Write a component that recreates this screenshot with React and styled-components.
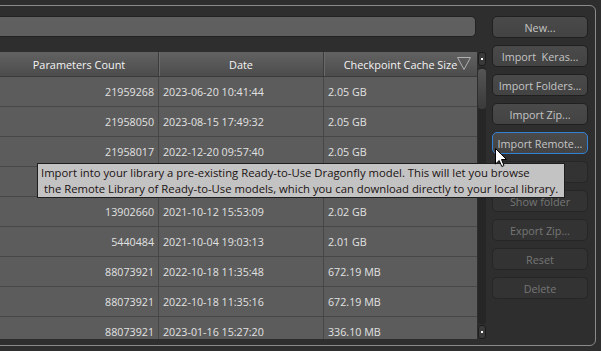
import React from 'react';
import styled, {createGlobalStyle} from 'styled-components';

const Global = createGlobalStyle`
html, body {
  margin:0;
  padding:0;
  background:#2e2e2e;
  overflow:hidden;
}
body {
  font-family:"Open Sans", "Noto Sans", sans-serif;
}
`;

const Frame = styled.div`
position:relative;
width:601px;
height:351px;
padding-top:5px;
box-sizing:border-box;
`;

const GroupBox = styled.div`
margin-left:-8px;
width:604px;
height:341px;
box-sizing:border-box;
border:1px solid #8a8a8a;
border-radius:0 6px 6px 0;
padding:10px 7px 0 7px;
display:grid;
grid-template-columns:486px 96px;
column-gap:6px;
`;

const Main = styled.div`
display:flex;
flex-direction:column;
`;

const SearchField = styled.div`
width:476px;
height:21px;
box-sizing:border-box;
background:#5f5f5f;
border:1px solid #222;
border-left:none;
border-radius:0 5px 5px 0;
`;

const TableArea = styled.div`
margin-top:15px;
display:flex;
gap:1px;
height:287px;
`;

const Table = styled.div`
width:477px;
height:287px;
overflow:hidden;
background:#5c5c5c;
color:#e2e2e2;
font-size:10.7px;
`;

const cols = '158px 165px 154px';

const HeaderRow = styled.div`
display:grid;
grid-template-columns:${cols};
height:25px;
background:linear-gradient(#626262, #4c4c4c);
border-bottom:1px solid #3a3a3a;
box-sizing:border-box;
`;

const HeadCell = styled.div`
position:relative;
display:flex;
align-items:center;
justify-content:center;
border-left:${p => (p.$first ? 'none' : '1px solid #3c3c3c')};
box-shadow:${p => (p.$first ? 'none' : 'inset 1px 0 #6a6a6a')};
color:#f4f4f4;
font-size:10.9px;
`;

const SortMark = styled.svg`
position:absolute;
right:6px;
top:5px;
`;

const Row = styled.div`
display:grid;
grid-template-columns:${cols};
height:30px;
border-bottom:1px solid #474747;
box-sizing:border-box;
`;

const Cell = styled.div`
display:flex;
align-items:center;
justify-content:${p => (p.$right ? 'flex-end' : 'flex-start')};
padding:0 4px;
border-left:${p => (p.$first ? 'none' : '1px solid #474747')};
white-space:nowrap;
`;

const ScrollBar = styled.div`
width:8px;
height:287px;
display:flex;
flex-direction:column;
gap:1px;
`;

const ScrollButton = styled.div`
height:14px;
flex:none;
box-sizing:border-box;
background:#3a3a3a;
border:1px solid #1c1c1c;
border-radius:3px;
display:flex;
align-items:center;
justify-content:center;
&::after {
  content:'';
  width:2px;
  height:2px;
  background:#fff;
}
`;

const Track = styled.div`
flex:1;
background:#262626;
border-radius:3px;
padding-top:2px;
`;

const Handle = styled.div`
height:40px;
border-radius:3px;
background:linear-gradient(#555, #3a3a3a);
`;

const Side = styled.div`
display:flex;
flex-direction:column;
gap:7px;
`;

const Button = styled.button`
height:22px;
width:96px;
box-sizing:border-box;
border-radius:5px;
font-family:"Open Sans", "Noto Sans", sans-serif;
font-size:10.8px;
padding:0;
white-space:pre;
color:${p => (p.disabled ? '#767676' : '#c4c4c4')};
background:${p => (p.disabled ? '#333' : 'linear-gradient(#4a4a4a, #434343)')};
border:1px solid ${p => (p.$focus ? '#2f82d6' : p.disabled ? '#262626' : '#202020')};
`;

const Tooltip = styled.div`
position:absolute;
left:37px;
top:163px;
width:528px;
height:35px;
box-sizing:border-box;
background:#c3c3c3;
border:1px solid #1e1e1e;
color:#1a1212;
font-size:11.3px;
line-height:16px;
padding:1px 0 0 3px;
white-space:pre;
`;

const Cursor = styled.svg`
position:absolute;
left:495px;
top:148px;
`;

const rows = [
  ['21959268', '2023-06-20 10:41:44', '2.05 GB'],
  ['21958050', '2023-08-15 17:49:32', '2.05 GB'],
  ['21958017', '2022-12-20 09:57:40', '2.05 GB'],
  ['', '', ''],
  ['13902660', '2021-10-12 15:53:09', '2.02 GB'],
  ['5440484', '2021-10-04 19:03:13', '2.01 GB'],
  ['88073921', '2022-10-18 11:35:48', '672.19 MB'],
  ['88073921', '2022-10-18 11:35:16', '672.19 MB'],
  ['88073921', '2023-01-16 15:27:20', '336.10 MB'],
];

const buttons = [
  {id: 'new', label: 'New...'},
  {id: 'keras', label: 'Import  Keras...'},
  {id: 'folders', label: 'Import Folders...'},
  {id: 'zip', label: 'Import Zip...'},
  {id: 'remote', label: 'Import Remote...', focus: true},
  {id: 'hidden', label: '', disabled: true},
  {id: 'show', label: 'Show folder', disabled: true},
  {id: 'export', label: 'Export Zip...', disabled: true},
  {id: 'reset', label: 'Reset', disabled: true},
  {id: 'delete', label: 'Delete', disabled: true},
];

const App = () => {
  return (
    <Frame>
      <Global />
      <GroupBox>
        <Main>
          <SearchField />
          <TableArea>
            <Table>
              <HeaderRow>
                <HeadCell $first>Parameters Count</HeadCell>
                <HeadCell>Date</HeadCell>
                <HeadCell>
                  Checkpoint Cache Size
                  <SortMark width="14" height="13" viewBox="0 0 14 13">
                    <path d="M0.5 0.5 L13.5 0.5 L7 12.5 Z" fill="none" stroke="#b0b0b0" strokeWidth="1" />
                  </SortMark>
                </HeadCell>
              </HeaderRow>
              {rows.map((r, i) => (
                <Row key={i}>
                  <Cell $first $right>{r[0]}</Cell>
                  <Cell>{r[1]}</Cell>
                  <Cell>{r[2]}</Cell>
                </Row>
              ))}
            </Table>
            <ScrollBar>
              <ScrollButton />
              <Track>
                <Handle />
              </Track>
              <ScrollButton />
            </ScrollBar>
          </TableArea>
        </Main>
        <Side>
          {buttons.map(b => (
            <Button key={b.id} disabled={b.disabled} $focus={b.focus}>{b.label}</Button>
          ))}
        </Side>
      </GroupBox>
      <Tooltip>
        {'Import into your library a pre-existing Ready-to-Use Dragonfly model. This will let you browse\n the Remote Library of Ready-to-Use models, which you can download directly to your local library.'}
      </Tooltip>
      <Cursor width="13" height="20" viewBox="0 0 13 20">
        <path d="M0.5 0.5 L0.5 16 L4.2 12.5 L6.8 18.5 L9 17.5 L6.5 11.5 L11.5 11.5 Z" fill="#fff" stroke="#000" strokeWidth="1" strokeLinejoin="round" />
      </Cursor>
    </Frame>
  );
};

export default App;
